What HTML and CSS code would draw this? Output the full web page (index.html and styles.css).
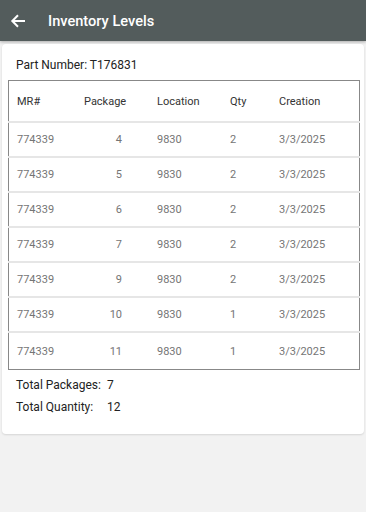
FILE: index.html
```html
<!DOCTYPE html>
<html>
<head>
<meta charset="utf-8">
<link rel="stylesheet" href="styles.css">
</head>
<body>
<header class="appbar">
  <svg class="back" width="16" height="16" viewBox="0 0 16 16"><path d="M15 8H2.5M8 2.3 2.3 8 8 13.7" fill="none" stroke="#fff" stroke-width="2"/></svg>
  <h1 class="title">Inventory Levels</h1>
</header>
<main class="card">
  <div class="part">Part Number: T176831</div>
  <table class="grid">
    <thead>
      <tr><th class="c-mr">MR#</th><th class="c-pkg">Package</th><th class="c-loc">Location</th><th class="c-qty">Qty</th><th class="c-date">Creation</th></tr>
    </thead>
    <tbody>
      <tr><td>774339</td><td class="num">4</td><td>9830</td><td>2</td><td>3/3/2025</td></tr>
      <tr><td>774339</td><td class="num">5</td><td>9830</td><td>2</td><td>3/3/2025</td></tr>
      <tr><td>774339</td><td class="num">6</td><td>9830</td><td>2</td><td>3/3/2025</td></tr>
      <tr><td>774339</td><td class="num">7</td><td>9830</td><td>2</td><td>3/3/2025</td></tr>
      <tr><td>774339</td><td class="num">9</td><td>9830</td><td>2</td><td>3/3/2025</td></tr>
      <tr><td>774339</td><td class="num">10</td><td>9830</td><td>1</td><td>3/3/2025</td></tr>
      <tr><td>774339</td><td class="num">11</td><td>9830</td><td>1</td><td>3/3/2025</td></tr>
    </tbody>
  </table>
  <div class="totals">
    <div class="trow"><span class="tlabel">Total Packages:</span><span>7</span></div>
    <div class="trow"><span class="tlabel">Total Quantity:</span><span>12</span></div>
  </div>
</main>
</body>
</html>
```
FILE: styles.css
```css
html, body { margin: 0; padding: 0; }
body {
  background: #f2f2f2;
  font-family: Roboto, "Noto Sans", sans-serif;
  width: 366px;
  height: 512px;
  overflow: hidden;
}
.appbar {
  height: 41px;
  background: #535c5c;
  display: flex;
  align-items: center;
  padding-left: 10px;
  padding-top: 1px;
  box-sizing: border-box;
  box-shadow: 0 1px 3px rgba(0,0,0,0.3);
}
.back { margin-right: 22px; }
.title {
  margin: 0;
  color: #fff;
  font-size: 14.6px;
  font-weight: 500;
}
.card {
  display: block;
  margin: 3px 2px 0 2px;
  background: #fff;
  border-radius: 4px;
  box-shadow: 0 1px 2px rgba(0,0,0,0.12);
  padding: 14px 5px 16px 6px;
}
.part {
  font-size: 12px;
  color: #222;
  padding-left: 8px;
  height: 22px;
}
.grid {
  width: 352px;
  border-collapse: collapse;
  border: 1px solid #888;
  font-size: 11px;
}
.grid th {
  text-align: left;
  font-weight: 400;
  color: #333;
  height: 40px;
  padding: 0 0 0 8px;
  border-bottom: 2px solid #e6e6e6;
}
.grid td {
  color: #757575;
  height: 33px;
  padding: 0 0 0 8px;
  border-bottom: 2px solid #e6e6e6;
}
.grid tbody tr:last-child td { border-bottom: none; height: 36px; }
.c-mr { width: 59px; }
.c-pkg { width: 65px; }
.c-loc { width: 65px; }
.c-qty { width: 41px; }
.grid td.num { text-align: right; padding-right: 27px; }
.totals { padding: 4px 0 0 8px; font-size: 12px; color: #222; }
.trow { display: flex; height: 22px; align-items: center; }
.tlabel { width: 91px; }
```
